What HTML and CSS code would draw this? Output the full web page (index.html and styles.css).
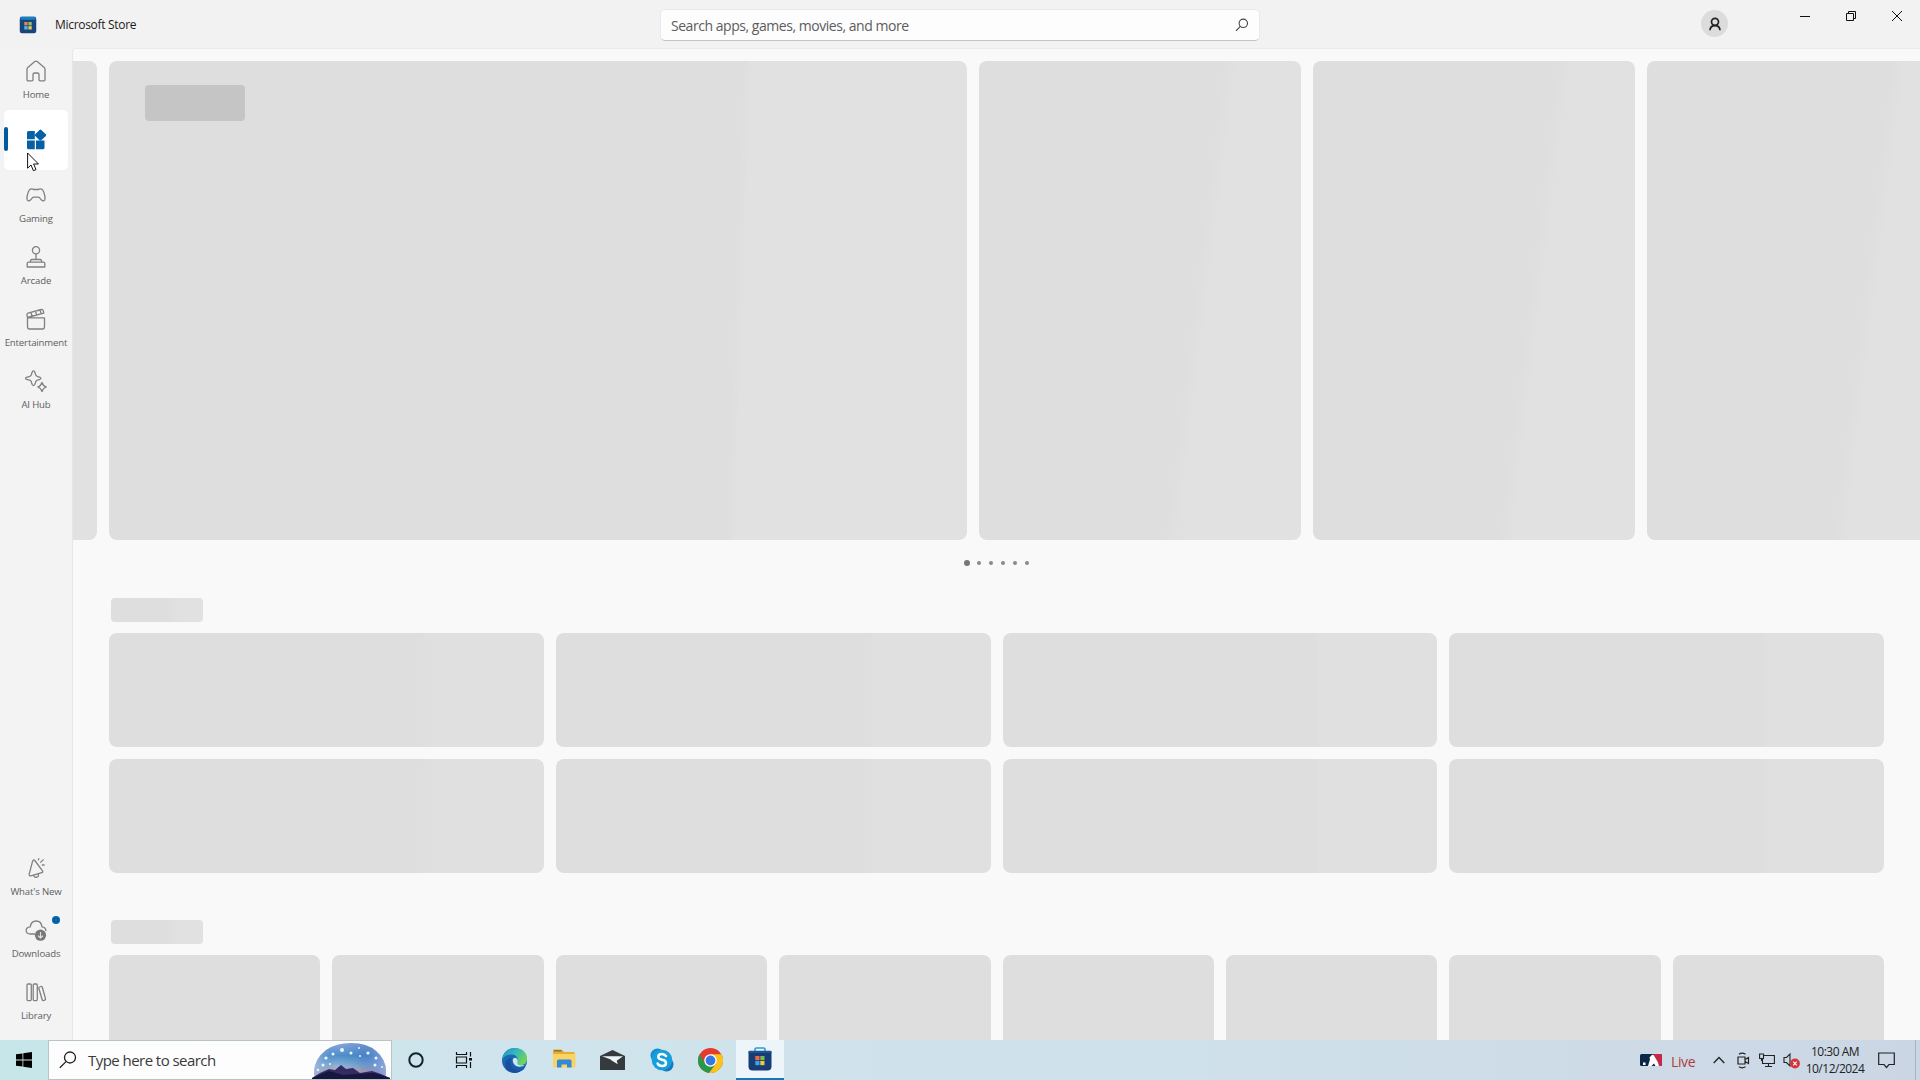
FILE: index.html
```html
<!DOCTYPE html>
<html lang="en">
<head>
<meta charset="utf-8">
<title>Microsoft Store</title>
<link rel="stylesheet" href="styles.css">
</head>
<body>
<div class="desktop">
  <div class="store">
    <header class="titlebar">
      <div class="brand">
        <svg class="brand-logo" width="18" height="18" viewBox="0 0 24 24">
          <path d="M1 4Q1 1 4 1H20Q23 1 23 4V20Q23 23 20 23H4Q1 23 1 20Z" fill="#17457c"/>
          <path d="M2 1H22V5H2Z" fill="#1780c0"/>
          <path d="M7 8h4.5v4.5H7z" fill="#d98b5c"/><path d="M12.5 8H17v4.5h-4.5z" fill="#9bbd62"/>
          <path d="M7 13.5h4.5V18H7z" fill="#5cb5d8"/><path d="M12.5 13.5H17V18h-4.5z" fill="#e8c75a"/>
        </svg>
        <span class="brand-name">Microsoft Store</span>
      </div>
      <div class="search">
        <span class="search-hint">Search apps, games, movies, and more</span>
        <svg width="14" height="14" viewBox="0 0 14 14" fill="none" stroke="#444" stroke-width="1.1"><circle cx="8.3" cy="5.3" r="4.2"/><path d="M5.3 8.4L1 12.8"/></svg>
      </div>
      <div class="window-tools">
        <div class="avatar">
          <svg width="14" height="14" viewBox="0 0 14 14" fill="none" stroke="#222" stroke-width="1.7"><circle cx="7" cy="4.8" r="3.5"/><path d="M2 13.2Q2.3 8.6 7 8.6T12 13.2"/></svg>
        </div>
        <div class="captions">
          <svg width="46" height="32" viewBox="0 0 46 32" stroke="#111" fill="none"><path d="M18 16.5h10"/></svg>
          <svg width="46" height="32" viewBox="0 0 46 32" stroke="#111" fill="none"><path d="M18.500 13.500h7v7h-7zM20.500 13.500v-2h7v7h-2"/></svg>
          <svg width="46" height="32" viewBox="0 0 46 32" stroke="#111" fill="none"><path d="M18 11l10 10M28 11l-10 10"/></svg>
        </div>
      </div>
    </header>

    <nav class="rail">
      <div class="rail-group">
        <div class="rail-item">
          <svg class="glyph" viewBox="0 0 22 22"><path d="M2 9.200Q2 8.200 2.800 7.500L9.800 1.500Q11 .6 12.200 1.500L19.200 7.500Q20 8.200 20 9.200V19.500Q20 20.800 18.800 20.800H15Q14 20.800 14 19.800V14.500Q14 13 12.500 13H9.500Q8 13 8 14.500V19.800Q8 20.800 7 20.800H3.200Q2 20.800 2 19.500Z"/></svg>
          <span>Home</span>
        </div>
        <div class="rail-item active">
          <svg class="glyph solid" viewBox="0 0 22 22"><path d="M3.500 2H9.800V10.300H2V3.500Q2 2 3.500 2ZM2 11.500H9.800V20.300H3.500Q2 20.300 2 18.800ZM11 11.500H19.500V18.800Q19.500 20.300 18 20.300H11Z"/><path d="M14.500 .9Q15.400 .1 16.300 .9L20.800 5.200Q21.600 6.100 20.800 7L16.300 11.200Q15.400 12 14.500 11.200L10.200 7Q9.400 6.100 10.200 5.200Z"/></svg>
        </div>
        <div class="rail-item">
          <svg class="glyph" viewBox="0 0 22 22"><path d="M6.500 4.800Q8 4.800 8.700 5.500H13.300Q14 4.800 15.500 4.800Q18 4.800 19.200 9.500Q20.600 14.500 19.600 16.200Q18.300 17.800 16.300 15.800L14.500 13.700Q14 13.200 13.200 13.200H8.800Q8 13.200 7.500 13.700L5.700 15.800Q3.700 17.800 2.400 16.200Q1.400 14.500 2.800 9.500Q4 4.800 6.500 4.800Z"/></svg>
          <span>Gaming</span>
        </div>
        <div class="rail-item">
          <svg class="glyph" viewBox="0 0 22 22"><circle cx="11" cy="4.300" r="3.600"/><path d="M11 8V13.500M5.500 16.200V14.800Q5.500 13.500 6.800 13.500H15.200Q16.500 13.500 16.500 14.800V16.200M2.200 21V17.500Q2.200 16.200 3.500 16.200H18.500Q19.800 16.200 19.800 17.500V21Z"/></svg>
          <span>Arcade</span>
        </div>
        <div class="rail-item">
          <svg class="glyph" viewBox="0 0 22 22"><path d="M2.500 9.800H19.500V18.800Q19.500 21 17.500 21H4.500Q2.500 21 2.500 18.800ZM2.500 9.500L1.900 6.900Q1.700 5.500 3 5.100L16.300 1.500Q17.800 1.200 18.200 2.500L18.800 5.200L2.500 9.500M6 4.500L7 8.200M10.500 3.200L11.700 6.900M15 2L16.200 5.700"/></svg>
          <span>Entertainment</span>
        </div>
        <div class="rail-item">
          <svg class="glyph" viewBox="0 0 22 22"><path d="M8.500 .8Q9.500 .8 9.800 2L10.800 5Q11.200 6 12.300 6.400L15 7.300Q16.800 8.300 15 9.300L12.300 10.200Q11.200 10.600 10.800 11.600L9.800 14.500Q8.500 16.500 7.200 14.500L6.200 11.600Q5.800 10.600 4.700 10.200L1.500 9.300Q-.3 8.300 1.500 7.300L4.700 6.400Q5.800 6 6.200 5L7.200 2Q7.500 .8 8.500 .8Z"/><path d="M17 12.500Q17.900 15.900 21.300 17Q17.900 18.200 17 21.600Q16.100 18.200 12.700 17Q16.100 15.900 17 12.500Z"/></svg>
          <span>AI Hub</span>
        </div>
      </div>
      <div class="rail-group">
        <div class="rail-item">
          <svg class="glyph" viewBox="0 0 22 22"><path d="M9.800 3.500L17.500 13.800Q18.300 15.200 16.800 15.600L5.800 18.800Q4 19 4.200 17.200L7.600 4.200Q8.400 2.200 9.800 3.500ZM8.500 18.200Q9.200 20.800 11.700 20.100T13.300 16.800M13.300 3.200L13.900 1.200M15.300 5.600L18.600 2.400M16.800 8H19.600"/></svg>
          <span>What's New</span>
        </div>
        <div class="rail-item">
          <svg class="glyph" viewBox="0 0 22 22"><path d="M10 15H5.300Q1.200 15 1.200 11.500Q1.200 8.200 5.200 7.800Q6.200 2 11.200 2T17 7.800Q20.700 8 21 12"/><circle class="fill" cx="15.500" cy="16.200" r="5.600"/><path class="cut" d="M15.500 13V18.800M13 16.600L15.500 19L18 16.600"/></svg>
          <span>Downloads</span>
          <i class="notice"></i>
        </div>
        <div class="rail-item">
          <svg class="glyph" viewBox="0 0 22 22"><path d="M3 3H5.200Q6.300 3 6.300 4V18.500Q6.300 19.600 5.200 19.600H3Q2 19.600 2 18.500V4Q2 3 3 3ZM9.200 3H11.300Q12.300 3 12.300 4V18.500Q12.300 19.600 11.300 19.600H9.200Q8.200 19.600 8.200 18.500V4Q8.200 3 9.200 3ZM14.500 6L16 5.500Q17 5.200 17.300 6.200L20.500 17.700Q20.800 18.800 19.800 19.100L18.500 19.500Q17.500 19.700 17.200 18.700L13.800 7.300Q13.500 6.300 14.500 6Z"/></svg>
          <span>Library</span>
        </div>
      </div>
    </nav>

    <main class="content">
      <section class="carousel">
        <div class="tile"></div>
        <div class="tile wide"><div class="badge"></div></div>
        <div class="tile"></div>
        <div class="tile"></div>
        <div class="tile"></div>
      </section>
      <div class="pager"><i class="current"></i><i></i><i></i><i></i><i></i><i></i></div>
      <section class="shelf">
        <div class="heading"></div>
        <div class="cards four"><div></div><div></div><div></div><div></div><div></div><div></div><div></div><div></div></div>
      </section>
      <section class="shelf">
        <div class="heading"></div>
        <div class="cards eight"><div></div><div></div><div></div><div></div><div></div><div></div><div></div><div></div></div>
      </section>
    </main>
  </div>

  <footer class="taskbar">
    <div class="start"><svg width="16" height="16" viewBox="0 0 16 16"><path d="M0 2.300L6.500 1.400V7.500H0ZM7.300 1.300L16 0V7.500H7.300ZM0 8.400H6.500V14.600L0 13.700ZM7.300 8.400H16V16L7.300 14.700Z"/></svg></div>
    <div class="task-search">
      <svg width="18" height="18" viewBox="0 0 18 18" fill="none" stroke="#222" stroke-width="1.300"><circle cx="11" cy="6.500" r="5.500"/><path d="M7 10.600L.8 16.800"/></svg>
      <span>Type here to search</span>
      <svg class="art" width="78" height="37" viewBox="0 0 78 37">
        <defs>
          <linearGradient id="sky" x1="0" y1="0" x2="0" y2="1"><stop offset="0" stop-color="#8ea6dc"/><stop offset=".35" stop-color="#4d8fcb"/><stop offset=".62" stop-color="#8cb2d6"/><stop offset=".8" stop-color="#e0ab9f"/></linearGradient>
          <linearGradient id="side" x1="0" y1="0" x2="1" y2="0"><stop offset="0" stop-color="#a0b8e2"/><stop offset=".3" stop-color="#4b8fc5" stop-opacity="0"/><stop offset=".65" stop-color="#3269bd" stop-opacity=".3"/><stop offset="1" stop-color="#91a7df"/></linearGradient>
        </defs>
        <path d="M3 37Q-1 20 14 8Q24 1 39 1Q55 1 64 9Q77 20 73 37Z" fill="url(#sky)"/>
        <path d="M3 37Q-1 20 14 8Q24 1 39 1Q55 1 64 9Q77 20 73 37Z" fill="url(#side)"/>
        <g fill="#e8f8ff"><circle cx="30" cy="8" r="2"/><circle cx="39" cy="11" r="1.500"/><circle cx="21" cy="12" r="1.500"/><circle cx="14" cy="16" r="1.600"/><circle cx="11" cy="23" r="1.500"/><circle cx="18" cy="22" r="1"/><circle cx="6" cy="28" r="1.200"/><circle cx="47" cy="6" r="1"/><circle cx="56" cy="11" r="1.600"/><circle cx="64" cy="16" r="1.500"/><circle cx="63" cy="23" r="1.500"/><circle cx="70" cy="25" r="1"/><circle cx="48" cy="14" r="1"/></g>
        <path d="M0 36L8 31L17 27L23 28L29 23L34 27L41 26L48 31L60 29L69 32L78 36V37H0Z" fill="#332b63"/>
        <path d="M0 36L17 29L31 33L45 32L62 31L78 36V37H0Z" fill="#15173e"/>
      </svg>
    </div>
    <div class="apps">
      <div class="app system"><svg width="18" height="18" viewBox="0 0 18 18"><circle cx="9" cy="9" r="6.700" fill="none" stroke="#10232d" stroke-width="2"/></svg></div>
      <div class="app system"><svg width="18" height="18" viewBox="0 0 18 18" fill="none" stroke="#111" stroke-width="1.200"><path d="M1.500 1V3.500H11.500V1M1.500 17V14.500H11.500V17M1.500 6H11.500V12H1.500ZM15.500 1V5.500M15.500 11V17"/><path d="M14 7H17V9.500H14Z" fill="#111" stroke="none"/></svg></div>
      <div class="app first"><svg width="25" height="25" viewBox="0 0 24 24">
        <defs><linearGradient id="edge-top" x1="0" y1="0" x2="1" y2=".5"><stop offset="0" stop-color="#218fc9"/><stop offset=".55" stop-color="#35b9bc"/><stop offset="1" stop-color="#6fd35a"/></linearGradient></defs>
        <circle cx="12" cy="12" r="12" fill="#1769b4"/>
        <path d="M.3 11Q2 0 12.500 0Q24 1 24 11Q23.500 16.500 18 16.500Q13.500 16.300 14.800 13Q16 7 9.800 6.200Q3 6 .3 11Z" fill="url(#edge-top)"/>
        <path d="M9.500 9.500Q6 16 11.500 20.500Q16 23.500 21.500 19.300Q17 24 12 24Q3 23 3 15Q4.500 10 9.500 9.500Z" fill="#1b4f9b"/>
        <path d="M10 10Q8.500 19 17.500 19.200Q20.500 19 22.600 17.400Q21.500 20 19.500 21.500Q10.500 23 8.800 15.500Q8.500 12 10 10Z" fill="#1c5bab"/><path d="M15 13Q15.500 10.500 13.500 9.500Q11 9 10.300 11Q10 16 15 17.800Q19 18.500 23.500 15.500Q21 17 18 16.500Q14 16.500 15 13Z" fill="#cfe8ee"/></svg></div>
      <div class="app"><svg width="24" height="22" viewBox="0 0 24 22"><path d="M1 1.500Q1 .5 2 .5H9.500L12 3H22.500V7H1Z" fill="#e8ad2c"/><path d="M2 1H9L10.500 2.500H2Z" fill="#8c7539"/><path d="M1 5H23.500V17Q23.500 18.500 22 18.500H2.500Q1 18.500 1 17Z" fill="#f9d364"/><path d="M5 18.500V12Q5 10.500 6.500 10.500H18Q19.500 10.500 19.500 12V18.500H15V15.500H9.500V18.500Z" fill="#3588d7"/></svg></div>
      <div class="app"><svg width="25" height="21" viewBox="0 0 25 21"><path d="M0 6L12.500 0L25 6V20H0Z" fill="#343a3e"/><path d="M2 6.300H23L16.700 10.700L17.800 14.200L12 10.800L10.200 9.200Z" fill="#edf5fa"/></svg></div>
      <div class="app"><svg width="24" height="24" viewBox="0 0 24 24"><circle cx="7.500" cy="7.500" r="7" fill="#168fd5"/><circle cx="16.500" cy="16.500" r="7" fill="#1677c4"/><circle cx="12" cy="12" r="10.300" fill="#169fda"/><path d="M16 8Q14.500 6 11.800 6Q8.300 6 8.300 8.800Q8.300 11 12 11.700Q16 12.400 16 15Q16 18 12.200 18Q8.700 18 7.600 15.500" fill="none" stroke="#fff" stroke-width="2.500" stroke-linecap="round"/></svg></div>
      <div class="app"><svg width="25" height="25" viewBox="0 0 24 24"><circle cx="12" cy="12" r="12" fill="#e33b2e"/><path d="M1.600 6A12 12 0 0 0 10.300 23.900L17.200 15L12 12L6.800 15Z" fill="#279a48"/><path d="M22.400 6H12L17.200 15L10.600 23.900A12 12 0 0 0 22.400 6Z" fill="#f8c31c"/><circle cx="12" cy="12" r="6" fill="#fff"/><circle cx="12" cy="12" r="4.700" fill="#3578e4"/></svg></div>
      <div class="app open"><svg width="24" height="24" viewBox="0 0 24 24"><path d="M7 5V2.500Q7 1 8.500 1H15.500Q17 1 17 2.500V5" fill="none" stroke="#2e9ad4" stroke-width="1.600"/><path d="M.5 4.500H23.500V19.500Q23.500 23.500 19.500 23.500H4.500Q.5 23.500 .5 19.500Z" fill="#173c76"/><path d="M.5 6V4.800Q.5 3.800 1.500 3.800H22.500Q23.500 3.800 23.500 4.800V6Z" fill="#1c5594"/><path d="M7.300 9H11.500V13.200H7.300Z" fill="#ee6648"/><path d="M12.300 9H16.500V13.200H12.300Z" fill="#7dbb44"/><path d="M7.300 14H11.500V18.200H7.300Z" fill="#38a6df"/><path d="M12.300 14H16.500V18.200H12.300Z" fill="#f3c443"/></svg></div>
    </div>
    <div class="tray">
      <div class="news">
        <svg width="22" height="12" viewBox="0 0 22 12"><rect width="22" height="12" rx="1.500" fill="#0c2747"/><path d="M13 0H20.500Q22 0 22 1.500V10.500Q22 12 20.500 12H18Z" fill="#c5294a"/><path d="M8 12L10 5.500L9.500 3.500L12 .8Q14 .5 14.500 2.500L16 5L18 8.500L19 12H15.500L14 9.500L11.500 12ZM3 8.500H5.500V11H3Z" fill="#fff"/></svg>
        <span>Live</span>
      </div>
      <svg class="up" width="12" height="8" viewBox="0 0 12 8" fill="none" stroke="#222" stroke-width="1.300"><path d="M.7 7L6 1.500L11.300 7"/></svg>
      <svg class="meet" width="13" height="17" viewBox="0 0 13 17" fill="none" stroke="#222" stroke-width="1.200"><path d="M1 5H8V12H1ZM8 7.500L11.500 5.500V11.500L8 9.500M2 2.200Q5 .2 8.500 2.200M2 14.800Q5 16.800 8.500 14.800"/></svg>
      <svg class="net" width="16" height="15" viewBox="0 0 16 15" fill="none" stroke="#222" stroke-width="1.100"><path d="M5 2.500H15.400V10.500H3.500V6M9.500 10.500V13.500M6 13.500H13M.6 1H4.500V5.500H.6ZM2.500 5.500V8"/></svg>
      <svg class="vol" width="18" height="17" viewBox="0 0 18 17"><path d="M1 5.500H3.500L7 2V14L3.500 10.500H1Z" fill="none" stroke="#222" stroke-width="1.100"/><circle cx="12" cy="11.500" r="4.900" fill="#d63438"/><path d="M10.200 9.700L13.800 13.300M13.800 9.700L10.200 13.300" stroke="#fff" stroke-width="1.100"/></svg>
      <div class="clock"><span class="time">10:30 AM</span><span class="date">10/12/2024</span></div>
      <svg class="action" width="17" height="17" viewBox="0 0 17 17" fill="none" stroke="#222" stroke-width="1.200"><path d="M.7 1H16.300V12.500H11L8.500 15.500L6 12.500H.7Z"/></svg>
      <div class="peek"></div>
    </div>
  </footer>
  <svg class="pointer" width="13" height="20" viewBox="0 0 13 20"><path d="M.6 1V16.200L4 13L6.400 18.700L9 17.600L6.600 12H11.500Z" fill="#fff" stroke="#111" stroke-width="1"/></svg>
</div>
</body>
</html>
```

FILE: styles.css
```css
* { box-sizing: border-box; }
body { margin: 0; font-family: "Open Sans", "Noto Sans", sans-serif; color: #1b1b1b; }
svg { display: block; flex: none; }

.desktop {
  position: relative;
  width: 1920px;
  height: 1080px;
  display: grid;
  grid-template-rows: 1040px 40px;
  overflow: hidden;
}
.store {
  display: grid;
  grid-template: 48px 992px / 72px 1848px;
  background: #f3f3f3;
  overflow: hidden;
}

/* Title bar */
.titlebar {
  grid-column: 1 / -1;
  display: grid;
  grid-template-columns: 660px 600px 1fr;
  background: #f2f2f2;
}
.brand { display: flex; align-items: center; gap: 18px; padding: 1px 0 0 19px; }
.brand-name { font-size: 12px; letter-spacing: -0.3px; }
.search {
  display: flex;
  align-items: center;
  justify-content: space-between;
  height: 32px;
  margin-top: 9px;
  padding: 0 10px;
  background: #fdfdfd;
  border: 1px solid #e9e9e9;
  border-bottom-color: #c4c4c4;
  border-radius: 5px;
  color: #5c5c5c;
}
.search-hint { font-size: 14px; letter-spacing: -0.46px; }
.window-tools { display: flex; justify-content: flex-end; gap: 54px; }
.avatar {
  display: grid;
  place-items: center;
  width: 27px;
  height: 27px;
  margin-top: 10px;
  border-radius: 50%;
  background: #dcdcdc;
}
.captions { display: flex; }

/* Navigation rail */
.rail {
  display: flex;
  flex-direction: column;
  justify-content: space-between;
  padding: 0 0 11px;
}
.rail-group { display: flex; flex-direction: column; gap: 2px; }
.rail-item {
  position: relative;
  display: flex;
  flex-direction: column;
  align-items: center;
  gap: 6px;
  width: 64px;
  height: 60px;
  margin-left: 4px;
  padding-top: 12px;
  border-radius: 5px;
  font-size: 9.6px;
  line-height: 14px;
  letter-spacing: -0.15px;
  white-space: nowrap;
  color: #606060;
}
.rail-item.active { background: #fff; padding-top: 19px; }
.rail-item.active::before {
  content: "";
  position: absolute;
  left: 0;
  top: 17px;
  width: 4px;
  height: 24px;
  border-radius: 2px;
  background: #005a9e;
}
.glyph { width: 22px; height: 22px; fill: none; stroke: #808080; stroke-width: 1.3; stroke-linejoin: round; }
.glyph.solid { fill: #0560a6; stroke: none; }
.glyph .fill { fill: #777; stroke: none; }
.glyph .cut { stroke: #e4e4e4; stroke-width: 1.1; }
.notice {
  position: absolute;
  left: 48px;
  top: 9px;
  width: 8px;
  height: 8px;
  border-radius: 50%;
  background: #0063a8;
}

/* Loading placeholders */
.content {
  background: #f9f9f9;
  border-top: 1px solid #eaeaea;
  border-left: 1px solid #e6e6e6;
  border-top-left-radius: 4px;
  overflow: hidden;
  padding: 12px 0 0 36px;
}
.carousel { display: flex; gap: 12px; margin-left: -334px; }
.tile {
  flex: none;
  width: 322px;
  height: 479px;
  border-radius: 8px;
  background: linear-gradient(97deg, #dedede 64%, #e1e1e1 68%);
}
.tile.wide {
  width: 858px;
  padding: 24px 36px;
  background: linear-gradient(92deg, #dedede 72.5%, #e1e1e1 73.5%);
}
.badge { width: 100px; height: 36px; border-radius: 4px; background: #c5c5c5; }
.pager {
  display: flex;
  align-items: center;
  gap: 8px;
  height: 46px;
  padding-left: 855px;
}
.pager i { width: 4px; height: 4px; border-radius: 50%; background: #8a8a8a; }
.pager .current { width: 6px; height: 6px; margin-right: -1px; background: #777; }
.shelf { margin-right: 36px; padding-top: 12px; }
.shelf + .shelf { padding-top: 47px; }
.heading {
  width: 92px;
  height: 24px;
  margin: 0 0 11px 2px;
  border-radius: 4px;
  background: linear-gradient(90deg, #dedede 60%, #e1e1e1 75%);
}
.cards { display: grid; gap: 12px; }
.cards > div { border-radius: 8px; background: #dedede; }
.four { grid-template-columns: repeat(4, 1fr); grid-auto-rows: 114px; }
.four > div { background: linear-gradient(90deg, #dedede 72%, #e0e0e0 73%); }
.eight { grid-template-columns: repeat(8, 1fr); grid-auto-rows: 212px; }

/* Taskbar */
.taskbar {
  display: flex;
  background: linear-gradient(90deg, #c6e6e9 0, #cfe4ec 24%, #cfe1ea 60%, #cedbe7 85%, #cad6e4 100%);
}
.start { display: grid; place-items: center; width: 48px; }
.task-search {
  display: flex;
  align-items: center;
  width: 344px;
  padding-left: 10px;
  background: #fdfdfd;
  border: 1px solid #b7c4c8;
  font-size: 15px;
  letter-spacing: -0.55px;
  color: #3a3a3a;
}
.task-search span { width: 235px; padding-left: 11px; }
.art { align-self: flex-end; }
.apps { display: flex; }
.app { display: grid; place-items: center; width: 49px; height: 40px; }
.app.system { width: 48px; }
.app.first { margin-left: 2px; }
.app.open { width: 48px; margin-left: 1px; background: #edf5fa; border-bottom: 2px solid #1478b4; }
.tray { display: flex; align-items: center; margin-left: auto; color: #222; }
.news { display: flex; align-items: center; gap: 9px; width: 73px; color: #b03a3a; font-size: 14px; letter-spacing: -0.4px; }
.news span { padding-top: 2px; }
.up { margin-right: 12px; }
.meet { margin-right: 9px; }
.net { margin-right: 8px; }
.clock {
  display: flex;
  flex-direction: column;
  align-items: center;
  width: 68px;
  padding-bottom: 1px;
  font-size: 12px;
  line-height: 17px;
  letter-spacing: -0.5px;
}
.action { margin: 0 20px 0 9px; }
.peek { width: 5px; height: 40px; border-left: 1px solid #a9b6c2; }

.pointer { position: absolute; left: 27px; top: 152px; }
```
